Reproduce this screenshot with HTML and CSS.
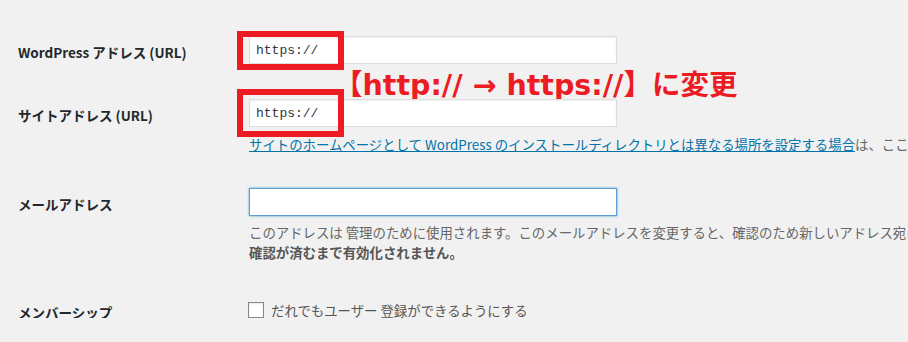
FILE: index.html
```html
<!DOCTYPE html>
<html lang="ja">
<head>
  <meta charset="UTF-8">
  <title>一般設定</title>
  <link rel="stylesheet" href="styles.css">
</head>
<body>
  <div class="form">
    <div class="row row-home">
      <div class="label">WordPress アドレス (URL)</div>
      <div class="field">
        <div class="mark">
          <input class="text code" type="text" value="https://">
          <span class="redbox box1"></span>
        </div>
        <p class="note">【http:// → https://】に変更</p>
      </div>
    </div>

    <div class="row row-site">
      <div class="label">サイトアドレス (URL)</div>
      <div class="field">
        <div class="mark">
          <input class="text code" type="text" value="https://">
          <span class="redbox box2"></span>
        </div>
        <p class="desc nowrap"><a href="#">サイトのホームページとして WordPress のインストールディレクトリとは異なる場所を設定する場合</a>は、ここに</p>
      </div>
    </div>

    <div class="row row-mail">
      <div class="label">メールアドレス</div>
      <div class="field">
        <input class="text focus" type="text" value="">
        <p class="desc mail-desc"><span class="nowrap">このアドレスは 管理のために使用されます。このメールアドレスを変更すると、確認のため新しいアドレス宛に</span><br><strong>確認が済むまで有効化されません。</strong></p>
      </div>
    </div>

    <div class="row row-member">
      <div class="label">メンバーシップ</div>
      <div class="field">
        <label class="check"><span class="box"></span>だれでもユーザー 登録ができるようにする</label>
      </div>
    </div>
  </div>
</body>
</html>
```

FILE: styles.css
```css
body {
  margin: 0;
  padding: 0 0 0 18px;
  background: #f1f1f1;
  color: #23282d;
  font-family: "Noto Sans CJK JP", "Noto Sans", sans-serif;
  font-size: 14px;
  overflow: hidden;
}

.row {
  display: flex;
  align-items: flex-start;
}

.label {
  width: 231px;
  flex: none;
  padding-top: 2px;
  margin-bottom: -2px;
  font-size: 13.5px;
  font-weight: 600;
  line-height: 28px;
  white-space: nowrap;
}

.field {
  flex: 1;
  min-width: 0;
}

.row-home { margin-top: 36px; }
.row-site { margin-top: 35px; }
.row-mail { margin-top: 34px; }
.row-member { margin-top: 40px; }
.row-member .label { line-height: 16px; }

.text {
  display: block;
  box-sizing: border-box;
  width: 368px;
  height: 28px;
  margin: 0;
  padding: 0 6px;
  border: 1px solid #ddd;
  background: #fff;
  box-shadow: inset 0 1px 2px rgba(0,0,0,0.07);
  color: #32373c;
  font-size: 14px;
  outline: none;
}

.code {
  font-family: "Liberation Mono", "DejaVu Sans Mono", monospace;
  font-size: 13px;
}

.focus {
  border-color: #5b9dd9;
  box-shadow: 0 0 2px rgba(30,140,190,0.8);
}

.mark {
  position: relative;
  width: 368px;
}

.redbox {
  position: absolute;
  left: -12px;
  width: 107px;
  box-sizing: border-box;
  border: 6px solid #ed1c24;
}

.box1 { top: -5px; height: 39px; }
.box2 { top: -10px; height: 48px; }

.note {
  position: absolute;
  left: 334px;
  top: 68px;
  margin: 0;
  color: #ed1c24;
  font-family: "DejaVu Sans", "Noto Sans CJK JP", sans-serif;
  font-size: 28.5px;
  font-weight: bold;
  line-height: 36px;
  white-space: nowrap;
}

.desc {
  margin: 7px 0 0;
  color: #666;
  font-size: 13.4px;
  line-height: 20px;
}

.desc a {
  color: #0073aa;
}

.desc strong {
  color: #555;
}

.mail-desc { margin-top: 6px; }

.nowrap { white-space: nowrap; }

.check {
  display: flex;
  align-items: center;
  gap: 7px;
  margin-left: -1px;
  color: #555;
  font-size: 13.4px;
  line-height: 16px;
}

.check .box {
  width: 16px;
  height: 16px;
  box-sizing: border-box;
  border: 1px solid #7e8993;
  background: #fff;
  box-shadow: inset 0 1px 2px rgba(0,0,0,0.1);
}
```
